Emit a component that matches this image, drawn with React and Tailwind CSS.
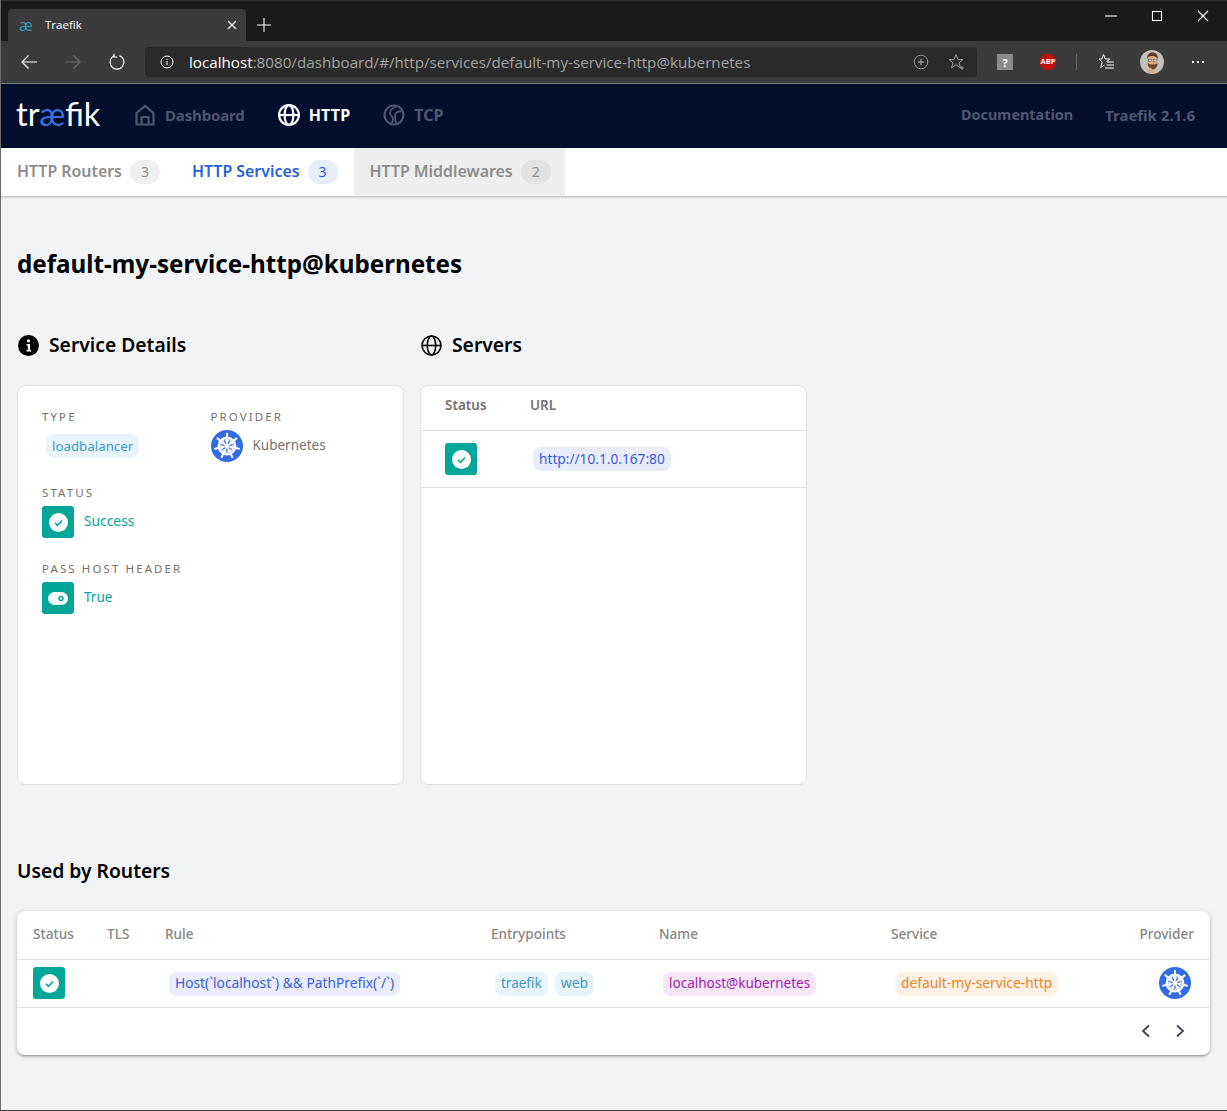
import React from "react";

const UI = "font-['Noto_Sans',sans-serif]";

function Wheel({ size = 32 }) {
  const spokes = [0, 1, 2, 3, 4, 5, 6].map((i) => (i * 360) / 7);
  return (
    <svg width={size} height={size} viewBox="0 0 32 32" className="shrink-0">
      <circle cx="16" cy="16" r="16" fill="#326ce5" />
      <circle cx="16" cy="16" r="8.2" fill="none" stroke="#fff" strokeWidth="2.4" />
      <circle cx="16" cy="16" r="2.2" fill="#fff" />
      {spokes.map((a) => (
        <g key={a} transform={`rotate(${a} 16 16)`}>
          <path d="M16 14V5.2" stroke="#fff" strokeWidth="1.6" />
          <path d="M16 5.4V3.8" stroke="#fff" strokeWidth="2" strokeLinecap="round" />
          <path d="M13.2 9.6h5.6L16 13.6z" fill="#fff" />
        </g>
      ))}
    </svg>
  );
}

function Check() {
  return (
    <div className="w-8 h-8 rounded-[3px] bg-[#00a697] flex items-center justify-center shrink-0">
      <svg width="19" height="19" viewBox="0 0 19 19">
        <circle cx="9.5" cy="9.5" r="9.5" fill="#fff" />
        <path d="M6 9.8l2.5 2.5L13 7.4" fill="none" stroke="#00a697" strokeWidth="1.5" />
      </svg>
    </div>
  );
}

function Chip({ className, children }) {
  return (
    <span className={`inline-flex items-center align-middle h-6 px-1.5 pb-px rounded-lg leading-6 whitespace-nowrap ${className}`}>
      {children}
    </span>
  );
}

const blue = "bg-[#e9edfb] text-[#3a5cdc]";
const cyan = "bg-[#e8f4f9] text-[#3b9cbf]";

function Label({ children }) {
  return <div className="text-[11.5px] leading-4 tracking-[2.1px] text-[#77706c] uppercase">{children}</div>;
}

function Globe({ size, color, sw = 1.6 }) {
  return (
    <svg width={size} height={size} viewBox="0 0 20 20" fill="none" stroke={color} strokeWidth={sw}>
      <circle cx="10" cy="10" r="9" />
      <path d="M1 10h18" />
      <ellipse cx="10" cy="10" rx="4" ry="9" />
    </svg>
  );
}

function BrowserChrome() {
  return (
    <div className="font-['Open_Sans',sans-serif]">
      <div className="h-[41px] bg-[#1a1a1a] border-t border-[#2c2c2c] flex items-end pl-[7px]">
        <div className="w-[238px] h-[32px] bg-[#3b3b3b] rounded-t-[4px] flex items-center pl-[11px] pr-[9px] text-white">
          <span className="text-[#2a9cb8] text-[16px] w-[26px] leading-none">æ</span>
          <span className="text-[11.5px] flex-1">Traefik</span>
          <svg width="10" height="10" viewBox="0 0 10 10" stroke="#fff" strokeWidth="1.2">
            <path d="M1 1l8 8M9 1l-8 8" />
          </svg>
        </div>
        <div className="h-[32px] flex items-center ml-[11px]">
          <svg width="14" height="14" viewBox="0 0 14 14" stroke="#fff" strokeWidth="1.1">
            <path d="M7 0v14M0 7h14" />
          </svg>
        </div>
        <div className="flex-1" />
        <div className="self-start flex items-center h-[30px] mr-[18px] gap-[34px]">
          <svg width="12" height="12" viewBox="0 0 12 12" stroke="#fff" strokeWidth="1.1"><path d="M0 6h12" /></svg>
          <svg width="12" height="12" viewBox="0 0 12 12" stroke="#fff" strokeWidth="1.1" fill="none"><rect x="1.5" y="1.5" width="9" height="9" /></svg>
          <svg width="12" height="12" viewBox="0 0 12 12" stroke="#fff" strokeWidth="1.1"><path d="M1 1l10 10M11 1L1 11" /></svg>
        </div>
      </div>
      <div className="h-[43px] bg-[#3b3b3b] border-b border-[#7a7a7a] flex items-center pl-[19px] pr-[18px]">
        <svg width="18" height="16" viewBox="0 0 18 16" fill="none" stroke="#fff" strokeWidth="1.2"><path d="M17 8H2M8.5 1.5L2 8l6.500 6.500" /></svg>
        <svg width="18" height="16" viewBox="0 0 18 16" fill="none" stroke="#6e6e6e" strokeWidth="1.2" className="ml-[26px]"><path d="M1 8h15M9.500 1.500L16 8l-6.500 6.500" /></svg>
        <svg width="18" height="18" viewBox="0 0 18 18" fill="none" stroke="#fff" strokeWidth="1.2" className="ml-[26px]">
          <path d="M6.500 2.600A7 7 0 1 0 11.500 2.600" /><path d="M6 0.800v3.200H9.200" />
        </svg>
        <div className="ml-[19px] w-[832px] h-[30px] bg-[#2a2a2a] rounded-[4px] flex items-center pl-[15px] pr-[11px] text-[15.2px]">
          <svg width="14" height="14" viewBox="0 0 14 14" fill="none" stroke="#fff" strokeWidth="1">
            <circle cx="7" cy="7" r="6" /><path d="M7 6v4M7 3.800v1" />
          </svg>
          <div className="ml-[15px] flex-1 whitespace-nowrap leading-[30px] pb-px">
            <span className="text-white">localhost</span>
            <span className="text-[#a3a3a3]">:8080/dashboard/#/http/services/default-my-service-http@kubernetes</span>
          </div>
          <svg width="16" height="16" viewBox="0 0 16 16" fill="none" stroke="#9a9a9a" strokeWidth="1">
            <circle cx="8" cy="8" r="6.800" /><path d="M8 5v6M5 8h6" strokeWidth="1.300" />
          </svg>
          <svg width="18" height="18" viewBox="0 0 18 18" fill="none" stroke="#9a9a9a" strokeWidth="1" className="ml-[19px]">
            <path d="M8 1.500l2 5h5l-4 3.300 1.500 5-4.500-3-4.500 3L5 9.800 1 6.500h5z" /><path d="M14 13v4M12 15h4" />
          </svg>
        </div>
        <div className="ml-[20px] w-4 h-4 bg-[#8c8c8c] flex items-center justify-center text-white text-[11px] font-bold leading-none">?</div>
        <div className="ml-[27px] w-4 h-4 bg-[#c40b0b] flex items-center justify-center text-white text-[7.500px] font-bold leading-none [clip-path:polygon(30%_0,70%_0,100%_30%,100%_70%,70%_100%,30%_100%,0_70%,0_30%)]">ABP</div>
        <div className="ml-[20px] w-px h-4 bg-[#666]" />
        <svg width="18" height="18" viewBox="0 0 18 18" fill="none" stroke="#fff" strokeWidth="1" className="ml-[20px]">
          <path d="M6.500 1.500L8.300 6H13L9.500 8.600M2 6h2.800L6.500 1.500M2 6l3.200 3L3.800 14.500 7.500 12" /><path d="M10 9h7M9.500 12h7.500M8 15h9" />
        </svg>
        <svg width="24" height="24" viewBox="0 0 24 24" className="ml-[25px]">
          <circle cx="12" cy="12" r="12" fill="#c4c1bc" />
          <ellipse cx="12.500" cy="11" rx="5.500" ry="7" fill="#e0a67d" />
          <path d="M7 9c0-5 2.500-6.500 5.500-6.500S18 4.500 18 9c-2-2.500-3.500-3-6-3-2 0-4 .5-5 3z" fill="#5a3a28" />
          <path d="M7.500 13c1 5 2.500 6.500 5.500 6.500s4-3 5-6.500c-2 1.500-3.500 1.500-5 1.500S9 14.500 7.500 13z" fill="#6b4630" />
          <rect x="8.500" y="9.500" width="3" height="2" fill="#dfe8ee" stroke="#555" strokeWidth=".5" />
          <rect x="13.500" y="9.500" width="3" height="2" fill="#dfe8ee" stroke="#555" strokeWidth=".5" />
          <path d="M7 23c0-3 1-5 3-5.500 2 1 3 2 3 5.500z" fill="#e0a67d" />
        </svg>
        <div className="ml-[28px] flex gap-[3px]">
          <span className="w-[2px] h-[2px] bg-white" /><span className="w-[2px] h-[2px] bg-white" /><span className="w-[2px] h-[2px] bg-white" />
        </div>
      </div>
    </div>
  );
}

function NavBar() {
  return (
    <div className="h-[64px] bg-[#020e2c] flex items-center pl-4 pr-[32px] pb-[2px] font-bold text-[#4f576e] text-[15px]">
      <div className="w-[84px] -mt-[2px] -ml-px text-[32.5px] leading-none font-normal text-white font-['Lato',sans-serif] whitespace-nowrap">
        tr<span className="text-[#3a6fd8]">æ</span>fik
      </div>
      <div className="ml-[35px] flex items-center gap-[10px]">
        <svg width="20" height="22" viewBox="0 0 20 22" fill="none" stroke="#4f576e" strokeWidth="2.200" strokeLinejoin="round">
          <path d="M1.500 20.500V9L10 1.800 18.500 9v11.500z" /><path d="M6.500 20.500V13h7v7.500" />
        </svg>
        <span className="tracking-[-0.01em]">Dashboard</span>
      </div>
      <div className="ml-[33px] flex items-center gap-[9px] text-white text-[16px]">
        <Globe size={22} color="#fff" sw={2} />
        <span className="tracking-[0.01em]">HTTP</span>
      </div>
      <div className="ml-[33px] flex items-center gap-[9px] text-[16px]">
        <svg width="22" height="22" viewBox="0 0 22 22" fill="none" stroke="#4f576e" strokeWidth="2.200">
          <circle cx="11" cy="11" r="9.500" /><path d="M14 2.500C9 4 7 6 7 9s3 3 3 6c0 2-1 4-2.500 5" strokeWidth="1.800" /><path d="M19.500 7C15 7 12.500 8.500 12 11s.5 5 1 8" strokeWidth="1.800" />
        </svg>
        TCP
      </div>
      <div className="flex-1" />
      <span className="text-[14.4px]">Documentation</span>
      <span className="ml-[32px]">Traefik 2.1.6</span>
    </div>
  );
}

function Tab({ label, n, active, hover }) {
  return (
    <div className={`h-full flex items-center px-4 pb-px gap-[8px] text-[15.9px] font-semibold ${hover ? "bg-[#eeeeee] w-[211px]" : ""} ${active ? "text-[#2a5fdc]" : "text-[#8c8c8c]"}`}>
      <span className="whitespace-nowrap">{label}</span>
      <span className={`w-[30px] h-6 rounded-full flex items-center justify-center text-[14px] font-normal pb-px shrink-0 ${active ? "bg-[#e6edfb]" : hover ? "bg-[#e2e2e2]" : "bg-[#efefef]"}`}>{n}</span>
    </div>
  );
}

const th = "px-4 pb-px text-left font-medium text-[13.6px] text-[#858585]";

export default function App() {
  return (
    <div className={`w-[1227px] h-[1111px] overflow-hidden bg-[#f2f3f5] border-l border-[#6b6b6b] border-b border-b-[#3a3a3a] ${UI}`}>
      <BrowserChrome />
      <NavBar />
      <div className="h-[49px] bg-white border-b border-[#c9c9c9] flex shadow-[0_1px_1px_rgba(0,0,0,0.1)]">
        <Tab label="HTTP Routers" n="3" />
        <Tab label="HTTP Services" n="3" active />
        <Tab label="HTTP Middlewares" n="2" hover />
      </div>
      <main className="pl-4 pr-4">
        <h1 className="mt-[49px] h-[35px] leading-[36px] text-[24.2px] font-bold text-black whitespace-nowrap">default-my-service-http@kubernetes</h1>
        <div className="mt-[46px] grid grid-cols-3 gap-x-4 w-[1193px]">
          <div>
            <div className="h-[36px] flex items-center gap-[10px] text-[19.3px] font-semibold text-black pl-[1px]">
              <svg width="21" height="21" viewBox="0 0 21 21">
                <circle cx="10.500" cy="10.500" r="10.500" fill="#000" />
                <circle cx="10.500" cy="5.800" r="1.600" fill="#fff" /><path d="M8.500 9h3.500v6h1.200v1.500H8.500V15h1.300v-4.500H8.500z" fill="#fff" />
              </svg>
              Service Details
            </div>
            <div className="mt-[22px] h-[400px] bg-white border border-[#dfdfdf] rounded-[8px] pl-[24px] pt-[23px]">
              <div className="grid grid-cols-[168.500px_1fr]">
                <div>
                  <Label>Type</Label>
                  <Chip className={`${cyan} text-[13.3px] mt-[9px] ml-[4px]`}>loadbalancer</Chip>
                </div>
                <div>
                  <Label>Provider</Label>
                  <div className="flex items-center gap-[10px] mt-[5px] text-[13.500px] text-[#77706c]"><Wheel /><span className="-mt-[2px]">Kubernetes</span></div>
                </div>
              </div>
              <div className="mt-[23px]">
                <Label>Status</Label>
                <div className="flex items-center gap-[10px] mt-[5px] text-[13.800px] text-[#00a697]"><Check /><span className="pb-[2px]">Success</span></div>
              </div>
              <div className="mt-[23px]">
                <Label>Pass Host Header</Label>
                <div className="flex items-center gap-[10px] mt-[5px] text-[13.500px] text-[#00a697]">
                  <div className="w-8 h-8 rounded-[3px] bg-[#00a697] flex items-center justify-center">
                    <svg width="20" height="13" viewBox="0 0 20 13">
                      <rect width="20" height="13" rx="6.500" fill="#fff" />
                      <circle cx="13" cy="6.500" r="2" fill="none" stroke="#00a697" strokeWidth="1.500" />
                    </svg>
                  </div>
                  <span className="pb-[2px]">True</span>
                </div>
              </div>
            </div>
          </div>
          <div>
            <div className="h-[36px] flex items-center gap-[10px] text-[19.3px] font-semibold text-black pl-[1px]">
              <Globe size={21} color="#000" sw={1.500} />
              Servers
            </div>
            <div className="mt-[22px] h-[400px] bg-white border border-[#dfdfdf] rounded-[8px]">
              <div className="h-[45px] flex items-center border-b border-[#e2e2e2] pl-[24px] pb-[5px] text-[13.5px] font-semibold text-[#77706c]">
                <span className="w-[85px]">Status</span><span>URL</span>
              </div>
              <div className="h-[57px] flex items-center border-b border-[#e2e2e2] pl-[24px]">
                <div className="w-[88px]"><Check /></div>
                <Chip className={`${blue} text-[13.7px]`}>http://10.1.0.167:80</Chip>
              </div>
            </div>
          </div>
        </div>
        <h2 className="mt-[68px] h-[36px] leading-[36px] text-[19.3px] font-semibold text-black">Used by Routers</h2>
        <div className="mt-[22px] w-[1193px] h-[144px] bg-white rounded-[8px] shadow-[0_1px_5px_rgba(0,0,0,0.2),0_2px_2px_rgba(0,0,0,0.14),0_3px_1px_-2px_rgba(0,0,0,0.12)] flex flex-col">
          <table className="w-full table-fixed border-collapse">
            <colgroup>
              <col className="w-[74px]" /><col className="w-[58px]" /><col className="w-[326px]" /><col className="w-[168px]" /><col className="w-[232px]" /><col /><col className="w-[120px]" />
            </colgroup>
            <thead>
              <tr className="h-[48px] border-b border-[#e2e2e2]">
                <th className={th}>Status</th><th className={th}>TLS</th><th className={th}>Rule</th><th className={th}>Entrypoints</th><th className={th}>Name</th><th className={th}>Service</th>
                <th className={`${th} text-right`}>Provider</th>
              </tr>
            </thead>
            <tbody>
              <tr className="h-[48px] border-b border-[#e2e2e2]">
                <td className="px-4"><Check /></td>
                <td />
                <td className="px-4"><Chip className={`${blue} text-[13.75px] ml-1`}>Host(`localhost`) &amp;&amp; PathPrefix(`/`)</Chip></td>
                <td className="px-4"><Chip className={`${cyan} text-[13.5px] ml-1`}>traefik</Chip><Chip className={`${cyan} text-[14px] ml-[7px]`}>web</Chip></td>
                <td className="px-4"><Chip className="bg-[#f5e7f8] text-[#a020b0] text-[13.5px] ml-1">localhost@kubernetes</Chip></td>
                <td className="px-4"><Chip className="bg-[#fcf1e6] text-[#e8851c] text-[13.8px] ml-1">default-my-service-http</Chip></td>
                <td className="pr-[19px]"><div className="flex justify-end"><Wheel /></div></td>
              </tr>
            </tbody>
          </table>
          <div className="flex-1 flex items-center justify-end pr-[23px] gap-[20px]">
            <svg width="14" height="14" viewBox="0 0 14 14" fill="none" stroke="#3d4354" strokeWidth="1.800"><path d="M10 1.500L4 7l6 5.500" /></svg>
            <svg width="14" height="14" viewBox="0 0 14 14" fill="none" stroke="#3d4354" strokeWidth="1.800"><path d="M4 1.500L10 7l-6 5.500" /></svg>
          </div>
        </div>
      </main>
    </div>
  );
}
